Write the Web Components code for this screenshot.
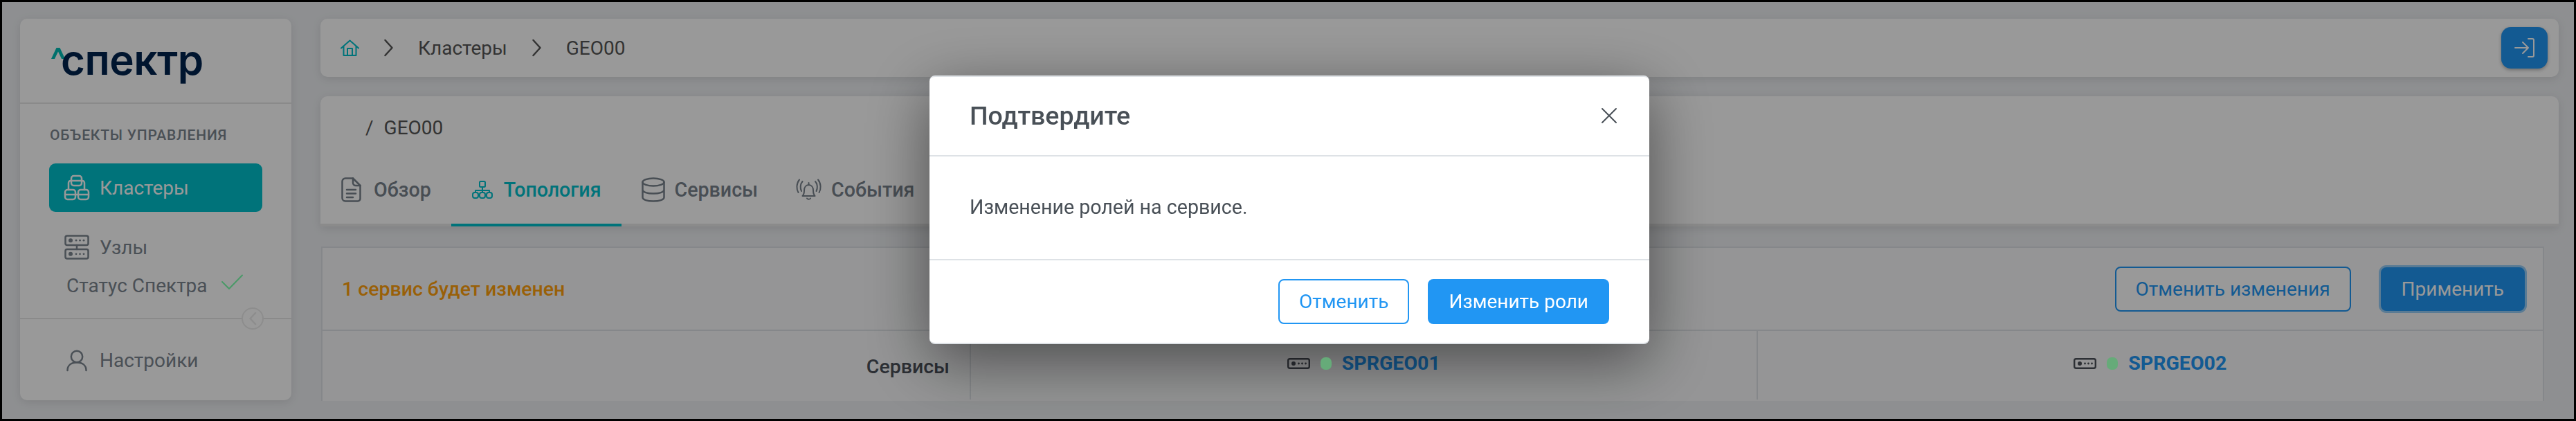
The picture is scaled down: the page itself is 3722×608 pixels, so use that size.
<!DOCTYPE html>
<html lang="ru">
<head>
<meta charset="utf-8">
<title>Спектр</title>
<style>
html, body { margin: 0; height: 100%; }
body {
  box-sizing: border-box;
  height: 608px;
  border: 3px solid #000;
  background: #edeff2;
  overflow: hidden;
  font-family: Roboto, "Liberation Sans", sans-serif;
  font-size: 28px;
  color: #7c858f;
}
</style>
</head>
<body>
<spk-app></spk-app>

<script>
// All icons live here, drawn at their real pixel size
const ICONS = {
  clusters: [36, 36, '<rect x="10" y="1" width="15" height="14" rx="3.5"/><path d="M10 8h15M10 8H9a3 3 0 0 0-3 3v10M25 8h1a3 3 0 0 1 3 3v10"/><rect x="1" y="21" width="15" height="14" rx="3.5"/><rect x="20" y="21" width="15" height="14" rx="3.5"/><path d="M1 28h34"/>'],
  nodes: [36, 36, '<rect x="1.5" y="1.5" width="33" height="13.5" rx="2.5"/><rect x="1.5" y="21" width="33" height="13.5" rx="2.5"/><path d="M18 15v6"/><g class="fill"><circle cx="9" cy="8.2" r="3"/><circle cx="9" cy="27.8" r="3"/><circle cx="17" cy="8.2" r="1.4"/><circle cx="22.5" cy="8.2" r="1.4"/><circle cx="28" cy="8.2" r="1.4"/><circle cx="17" cy="27.8" r="1.4"/><circle cx="22.5" cy="27.8" r="1.4"/><circle cx="28" cy="27.8" r="1.4"/></g>'],
  user: [30, 30, '<circle cx="15" cy="10" r="8.2"/><path d="M1.5 30c0-7.5 5.5-11.5 13.5-11.5s13.5 4 13.5 11.5"/>'],
  check: [31, 22, '<path d="M1 11l10 10L30 1.5"/>'],
  home: [27, 24, '<path d="M1 12.5L13.5 1.5 26 12.5M4.5 10v13h18V10M10 23v-10h7v10"/>'],
  chevron: [13, 24, '<path d="M1.5 1l10 11-10 11"/>'],
  back: [10, 18, '<path d="M9 1L1.5 9 9 17"/>'],
  close: [22, 22, '<path d="M1 1l20 20M21 1L1 21"/>'],
  login: [29, 28, '<path d="M1 14h19M12 6l8 8-8 8M20 1h6a2 2 0 0 1 2 2v22a2 2 0 0 1-2 2h-6"/>'],
  doc: [29, 36, '<path d="M6 1.5h11L27.5 12v19a3.5 3.5 0 0 1-3.5 3.5H6A4.5 4.5 0 0 1 1.5 30V6A4.5 4.5 0 0 1 6 1.5z"/><path d="M17 1.5V8a4 4 0 0 0 4 4h6.5M8 18h13M8 23.5h13M8 29h9"/>'],
  topology: [30, 26, '<rect x="11" y="1" width="8" height="8" rx="1.5"/><path d="M15 9v5M5 17v-3h20v3M15 14v3"/><rect x="1" y="17" width="8" height="8" rx="3"/><rect x="11" y="17" width="8" height="8" rx="3"/><rect x="21" y="17" width="8" height="8" rx="3"/>'],
  database: [34, 36, '<ellipse cx="17" cy="7" rx="15.5" ry="5.5"/><path d="M1.5 7v22c0 3.5 7 5.5 15.5 5.5s15.5-2 15.5-5.5V7M1.5 18c0 3.5 7 5.5 15.5 5.5s15.5-2 15.5-5.5"/>'],
  bell: [35, 32, '<path d="M8.5 25c2-2 2.5-4 2.5-8 0-4.5 2.5-8 6.5-8s6.5 3.5 6.5 8c0 4 .5 6 2.5 8zM15 28.5c.6 1.5 4.4 1.5 5 0M17.5 9V6"/><path d="M8.5 4C5 8 5 14 7 18M27 4c3.5 4 3.5 10 1.5 14M4 1.5C-.5 7-.5 15 2.5 20M31 1.5C35.5 7 35.5 15 32.5 20"/>'],
  server: [33, 16, '<rect x="1.2" y="1.2" width="30.6" height="13.6" rx="2.5"/><g class="fill"><circle cx="9" cy="8" r="3"/><circle cx="16.5" cy="8" r="1.4"/><circle cx="21.5" cy="8" r="1.4"/><circle cx="26.5" cy="8" r="1.4"/></g>']
};

class SpkIcon extends HTMLElement {
  connectedCallback() {
    const [w, h, body] = ICONS[this.getAttribute('name')];
    const sw = this.getAttribute('stroke') || 2.5;
    this.attachShadow({mode: 'open'}).innerHTML = `
<style>
:host { display: block; flex: none; width: ${w}px; height: ${h}px; line-height: 0; }
svg { fill: none; stroke: currentColor; stroke-width: ${sw}; stroke-linecap: round; stroke-linejoin: round; overflow: visible; }
.fill { fill: currentColor; stroke: none; }
</style>
<svg width="${w}" height="${h}" viewBox="0 0 ${w} ${h}">${body}</svg>`;
  }
}

class SpkButton extends HTMLElement {
  connectedCallback() {
    this.attachShadow({mode: 'open'}).innerHTML = `
<style>
:host {
  display: inline-flex;
  align-items: center;
  box-sizing: border-box;
  height: 65px;
  padding: 0 28px;
  border: 2px solid #2196f3;
  border-radius: 8px;
  background: #fff;
  color: #2196f3;
  font: 400 28px Roboto, sans-serif;
  white-space: nowrap;
}
:host([solid]) { background: #2196f3; color: #fff; }
:host([ring]) { box-shadow: 0 0 0 3px rgba(33, 150, 243, .45); height: 63px; }
</style>
<slot></slot>`;
  }
}

class SpkSidebar extends HTMLElement {
  connectedCallback() {
    this.attachShadow({mode: 'open'}).innerHTML = `
<style>
:host {
  display: block;
  flex: none;
  width: 392px;
  height: 551px;
  background: #fff;
  border-radius: 10px;
  box-shadow: 0 3px 14px rgba(0, 0, 0, .1);
  font: 400 28px Roboto, sans-serif;
  color: #7c858f;
}
.logo {
  display: flex;
  align-items: flex-start;
  box-sizing: border-box;
  height: 123px;
  padding: 42px 0 0 45px;
  border-bottom: 2px solid #e6e6e6;
}
.logo svg { flex: none; margin-right: -6px; }
.logo span {
  font: 600 60px/34px Inter, sans-serif;
  letter-spacing: -.5px;
  color: #00234f;
}
h2 {
  margin: 32px 0 28px 43px;
  font: 500 21px/26px Roboto, sans-serif;
  letter-spacing: .8px;
  color: #7c858f;
}
.item { display: flex; align-items: center; gap: 15px; margin-left: 64px; height: 36px; }
.active {
  box-sizing: border-box;
  height: 70px;
  margin: 0 42px;
  padding-left: 22px;
  border-radius: 9px;
  background: #00c0cb;
  color: #fff;
}
.nodes { margin-top: 33px; }
.status { margin: 19px 0 0 67px; gap: 20px; }
.status spk-icon { color: #7cffad; margin-top: -10px; }
.foot { position: relative; margin-top: 29px; border-top: 2px solid #e6e6e6; }
.collapse {
  position: absolute;
  top: -17px;
  left: 320px;
  box-sizing: border-box;
  display: flex;
  align-items: center;
  justify-content: center;
  width: 32px;
  height: 32px;
  border: 2px solid #ebebeb;
  border-radius: 50%;
  background: #fff;
  color: #ebebeb;
}
.settings { margin: 41px 0 0 67px; gap: 18px; }
</style>
<div class="logo">
  <svg width="20" height="16" viewBox="0 0 20 16"><path fill="#00bbb5" d="M7.5 0h5L20 16h-5L10 5.5 5 16H0z"/></svg>
  <span>спектр</span>
</div>
<h2>ОБЪЕКТЫ УПРАВЛЕНИЯ</h2>
<div class="item active"><spk-icon name="clusters"></spk-icon>Кластеры</div>
<div class="item nodes"><spk-icon name="nodes"></spk-icon>Узлы</div>
<div class="item status">Статус Спектра<spk-icon name="check" stroke="2"></spk-icon></div>
<div class="foot"><div class="collapse"><spk-icon name="back"></spk-icon></div></div>
<div class="item settings"><spk-icon name="user"></spk-icon>Настройки</div>`;
  }
}

class SpkTopbar extends HTMLElement {
  connectedCallback() {
    this.attachShadow({mode: 'open'}).innerHTML = `
<style>
:host {
  display: flex;
  align-items: center;
  gap: 36px;
  box-sizing: border-box;
  height: 84px;
  padding: 0 16px 0 29px;
  background: #fff;
  border-radius: 10px;
  box-shadow: 0 3px 14px rgba(0, 0, 0, .1);
  font: 400 28px Roboto, sans-serif;
  color: #555;
}
.home { color: #00c0cb; }
.grow { flex: 1; }
.login {
  display: flex;
  align-items: center;
  justify-content: center;
  width: 67px;
  height: 60px;
  border-radius: 14px;
  background: #2196f3;
  color: #fff;
  box-shadow: 0 2px 5px rgba(0, 0, 0, .3);
}
</style>
<spk-icon class="home" name="home" stroke="2"></spk-icon>
<spk-icon name="chevron"></spk-icon>
<span>Кластеры</span>
<spk-icon name="chevron"></spk-icon>
<span>GEO00</span>
<div class="grow"></div>
<div class="login"><spk-icon name="login" stroke="2"></spk-icon></div>`;
  }
}

class SpkTab extends HTMLElement {
  connectedCallback() {
    this.attachShadow({mode: 'open'}).innerHTML = `
<style>
:host {
  display: flex;
  align-items: center;
  gap: var(--gap, 16px);
  box-sizing: border-box;
  height: 98px;
  padding: 0 29px 4px var(--start, 29px);
  margin-bottom: -4px;
  border-bottom: 4px solid transparent;
  font: 500 28.6px Roboto, sans-serif;
  color: #78828c;
}
:host([active]) { color: #00c0cb; border-bottom-color: #00c0cb; }
</style>
<spk-icon name="${this.getAttribute('icon')}" stroke="${this.getAttribute('stroke') || 2.5}"></spk-icon>
<slot></slot>`;
  }
}

class SpkCluster extends HTMLElement {
  connectedCallback() {
    this.attachShadow({mode: 'open'}).innerHTML = `
<style>
:host {
  display: block;
  background: #fff;
  border-radius: 10px 10px 0 0;
  box-shadow: 0 3px 14px rgba(0, 0, 0, .1);
  font: 400 28px Roboto, sans-serif;
  color: #555;
}
.title { display: flex; align-items: center; gap: 15px; height: 90px; padding-left: 65px; }
.tabs { display: flex; border-bottom: 4px solid #e8e8e8; }
</style>
<div class="title"><span>/</span><span>GEO00</span></div>
<div class="tabs"><slot></slot></div>`;
  }
}

class SpkChanges extends HTMLElement {
  connectedCallback() {
    this.attachShadow({mode: 'open'}).innerHTML = `
<style>
:host {
  display: block;
  box-sizing: border-box;
  height: 223px;
  margin: 0 21px 0 1px;
  border: 2px solid #dee2e6;
  border-bottom: 0;
  background: #f8f9fa;
  font: 400 28.5px Roboto, sans-serif;
}
.head {
  display: flex;
  align-items: center;
  box-sizing: border-box;
  height: 120px;
  padding: 0 26px 0 28px;
  border-bottom: 2px solid #dee2e6;
}
.note { flex: 1; font-weight: 500; color: #ffa00d; }
.actions { display: flex; align-items: center; gap: 43px; }
.grid { display: grid; grid-template-columns: 935px 1fr 1fr; height: 99px; }
.cell { padding-top: 34px; line-height: 36px; }
.label { text-align: right; padding-right: 29px; font-weight: 500; color: #4b5059; }
spk-host { border-left: 2px solid #dee2e6; }
</style>
<div class="head">
  <div class="note">1 сервис будет изменен</div>
  <div class="actions">
    <spk-button>Отменить изменения</spk-button>
    <spk-button solid ring>Применить</spk-button>
  </div>
</div>
<div class="grid">
  <div class="cell label">Сервисы</div>
  <spk-host>SPRGEO01</spk-host>
  <spk-host>SPRGEO02</spk-host>
</div>`;
  }
}

class SpkHost extends HTMLElement {
  connectedCallback() {
    this.attachShadow({mode: 'open'}).innerHTML = `
<style>
:host {
  display: flex;
  justify-content: center;
  align-items: flex-start;
  gap: 15px;
  padding-top: 32px;
  font: 700 28.5px/30px Roboto, sans-serif;
  color: #2196f3;
}
spk-icon { color: #4b5059; margin-top: 7px; }
i { position: relative; z-index: 2; width: 16px; height: 18px; margin-top: 6px; border-radius: 7px; background: #66ab79; }
</style>
<spk-icon name="server" stroke="2.4"></spk-icon><i></i><slot></slot>`;
  }
}

class SpkConfirm extends HTMLElement {
  connectedCallback() {
    this.attachShadow({mode: 'open'}).innerHTML = `
<style>
:host {
  position: fixed;
  inset: 0;
  display: flex;
  justify-content: center;
  align-items: flex-start;
  padding-top: 109px;
  box-sizing: border-box;
  background: rgba(0, 0, 0, .4);
  font: 400 28.6px Roboto, sans-serif;
  color: #495057;
}
.dialog {
  box-sizing: border-box;
  width: 1040px;
  height: 388px;
  margin-left: 4px;
  background: #fff;
  border: 2px solid #dee2e6;
  border-width: 2px 0;
  border-radius: 8px;
  box-shadow: 0 24px 90px rgba(0, 0, 0, .5);
}
header {
  display: flex;
  align-items: center;
  justify-content: space-between;
  box-sizing: border-box;
  height: 115px;
  padding: 0 47px 2px 58px;
  border-bottom: 2px solid #dee2e6;
}
h1 { margin: 0; font: 500 37.5px Roboto, sans-serif; }
.body {
  display: flex;
  align-items: center;
  box-sizing: border-box;
  height: 150px;
  padding: 0 0 3px 58px;
  border-bottom: 2px solid #dee2e6;
}
footer { display: flex; justify-content: flex-end; gap: 27px; padding: 27px 58px 0 0; }
</style>
<div class="dialog" role="dialog">
  <header><h1>Подтвердите</h1><spk-icon name="close" stroke="2"></spk-icon></header>
  <div class="body">Изменение ролей на сервисе.</div>
  <footer>
    <spk-button>Отменить</spk-button>
    <spk-button solid>Изменить роли</spk-button>
  </footer>
</div>`;
  }
}

class SpkApp extends HTMLElement {
  connectedCallback() {
    this.attachShadow({mode: 'open'}).innerHTML = `
<style>
:host { display: flex; gap: 42px; padding: 24px 22px 0 26px; }
main { flex: 1; display: flex; flex-direction: column; }
spk-cluster { margin: 28px 0 29px; }
</style>
<spk-sidebar></spk-sidebar>
<main>
  <spk-topbar></spk-topbar>
  <spk-cluster>
    <spk-tab icon="doc" style="--start: 30px; --gap: 18px">Обзор</spk-tab>
    <spk-tab icon="topology" stroke="2" style="--start: 30px; --gap: 16px" active>Топология</spk-tab>
    <spk-tab icon="database" style="--gap: 14px">Сервисы</spk-tab>
    <spk-tab icon="bell" stroke="2" style="--start: 27px; --gap: 15px">События</spk-tab>
  </spk-cluster>
  <spk-changes></spk-changes>
</main>
<spk-confirm></spk-confirm>`;
  }
}

customElements.define('spk-icon', SpkIcon);
customElements.define('spk-button', SpkButton);
customElements.define('spk-sidebar', SpkSidebar);
customElements.define('spk-topbar', SpkTopbar);
customElements.define('spk-tab', SpkTab);
customElements.define('spk-cluster', SpkCluster);
customElements.define('spk-host', SpkHost);
customElements.define('spk-changes', SpkChanges);
customElements.define('spk-confirm', SpkConfirm);
customElements.define('spk-app', SpkApp);
</script>
</body>
</html>
